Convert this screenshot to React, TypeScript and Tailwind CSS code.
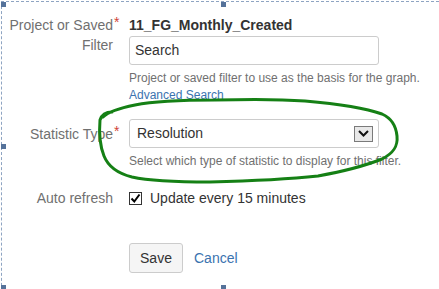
import React from "react";

const label = "text-[14px] leading-[20px] text-[#707070] text-right w-[111px] shrink-0 relative";

function Req() {
  return (
    <span className="absolute left-full top-[-5px] ml-[1px] text-[14px] leading-[20px] text-[#d04437]">*</span>
  );
}

function Handle({ className }: { className: string }) {
  return <div className={`absolute w-[5px] h-[5px] bg-[#55729a] ${className}`} />;
}

export default function App() {
  return (
    <div
      className="relative w-[439px] h-[289px] overflow-hidden bg-white text-[#333]"
      style={{ fontFamily: '"Liberation Sans", Arial, sans-serif' }}
    >
      <div className="mt-[1px] ml-[1px] h-[300px] border-t border-l border-dashed border-[#8ea4c2] pt-[13px]">
        {/* Filter */}
        <div className="flex">
          <div className={label}>
            <span className="relative">
              Project or Saved
              <Req />
            </span>
            <br />
            Filter
          </div>
          <div className="ml-[16px] w-[250px]">
            <p className="text-[14px] leading-[20px] font-bold text-[#333]">11_FG_Monthly_Created</p>
            <div className="mt-[1px] h-[29px] rounded-[3px] border border-[#cccccc] px-[5px] flex items-center text-[14px] text-[#333]">
              Search
            </div>
            <div className="mt-[5px] text-[12px] leading-[17px] text-[#707070] whitespace-nowrap">
              <p>Project or saved filter to use as the basis for the graph.</p>
              <p className="text-[#3b73af]">Advanced Search</p>
            </div>
          </div>
        </div>

        {/* Statistic type */}
        <div className="flex mt-[15px]">
          <div className={`${label} mt-[5px] h-[20px]`}>
            <span className="relative">
              Statistic Type
              <Req />
            </span>
          </div>
          <div className="ml-[16px] w-[250px]">
            <div className="h-[29px] rounded-[3px] border border-[#cccccc] pl-[7px] pr-[5px] flex items-center justify-between text-[14px] text-[#333]">
              <span>Resolution</span>
              <span className="w-[19px] h-[16px] border border-[#7a7a7a] bg-[#e8e8e8] flex items-center justify-center">
                <svg width="11" height="7" viewBox="0 0 11 7">
                  <path d="M1 1 L5.5 5.5 L10 1" fill="none" stroke="#111" strokeWidth="2" />
                </svg>
              </span>
            </div>
            <p className="mt-[5px] text-[12px] leading-[17px] text-[#707070] whitespace-nowrap">
              Select which type of statistic to display for this filter.
            </p>
          </div>
        </div>

        {/* Auto refresh */}
        <div className="flex mt-[18px]">
          <div className={label}>Auto refresh</div>
          <div className="ml-[16px] flex items-start">
            <span className="mt-[4px] w-[13px] h-[13px] border border-[#333] bg-white flex items-center justify-center">
              <svg width="11" height="11" viewBox="0 0 11 11">
                <path d="M1.5 5.5 L4.3 8.5 L9.5 1.5" fill="none" stroke="#000" strokeWidth="2" />
              </svg>
            </span>
            <span className="ml-[8px] text-[14px] leading-[20px] text-[#333]">Update every 15 minutes</span>
          </div>
        </div>

        {/* Buttons */}
        <div className="flex items-center mt-[35px] ml-[127px]">
          <button className="h-[30px] w-[54px] rounded-[3px] border border-[#cccccc] bg-[#f5f5f5] text-[14px] text-[#333]">
            Save
          </button>
          <span className="ml-[11px] text-[14px] text-[#3b73af]">Cancel</span>
        </div>
      </div>

      <Handle className="left-[1px] top-[2px]" />
      <Handle className="left-[221px] top-[2px]" />
      <Handle className="left-[1px] top-[144px]" />
      <Handle className="left-[1px] top-[285px]" />
      <Handle className="left-[221px] top-[285px]" />

      {/* hand-drawn annotation */}
      <svg className="absolute left-0 top-0 pointer-events-none" width="439" height="289" viewBox="0 0 439 289">
        <path
          d="M112 112 C106 112 102 114 100 120 C99 132 100 146 104 156 C108 166 116 173 132 177 C150 181 175 182 210 182 C250 181 290 179 318 176 C340 172 362 167 382 159 C394 153 398 146 397 136 C396 126 391 118 382 114 C365 108 340 104 305 101 C280 99 250 99 215 100 C180 100 155 101 135 105 C120 108 108 112 103 117"
          fill="none"
          stroke="#158015"
          strokeWidth="3"
          strokeLinecap="round"
          strokeLinejoin="round"
        />
      </svg>
    </div>
  );
}
